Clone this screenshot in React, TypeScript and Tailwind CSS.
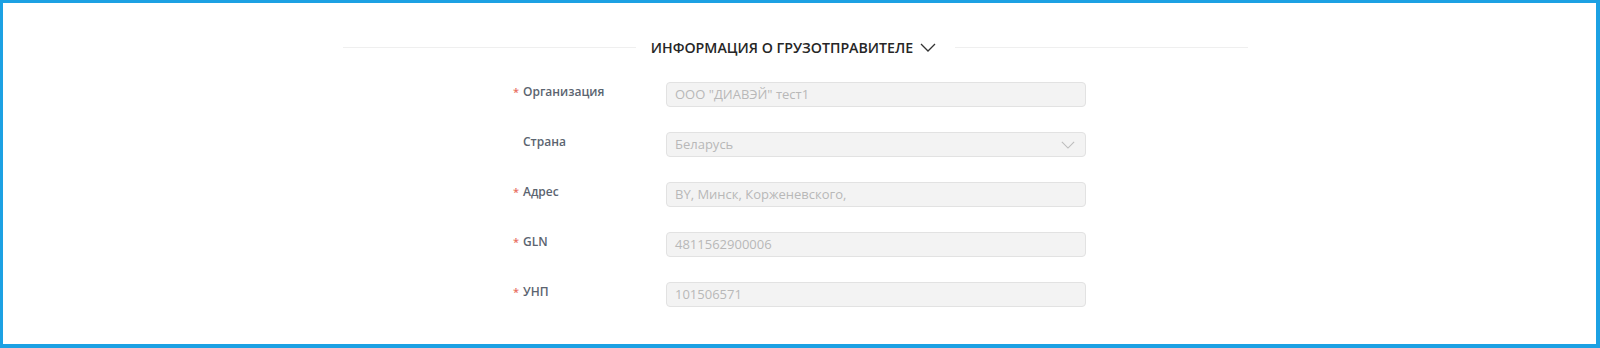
const fields = [
  { label: "Организация", value: 'ООО "ДИАВЭЙ" тест1', required: true },
  { label: "Страна", value: "Беларусь", required: false, select: true },
  { label: "Адрес", value: "BY, Минск, Корженевского,", required: true },
  { label: "GLN", value: "4811562900006", required: true },
  { label: "УНП", value: "101506571", required: true },
];

function Chevron({ className }: { className?: string }) {
  return (
    <svg viewBox="0 0 16 9" fill="none" className={className}>
      <path d="M1 1l7 7 7-7" stroke="currentColor" strokeWidth="1.3" />
    </svg>
  );
}

export default function App() {
  return (
    <div
      className="h-[348px] border-[3px] border-r-4 border-b-4 border-[#1ca1e3] bg-white"
      style={{ fontFamily: '"Open Sans", "Noto Sans", sans-serif' }}
    >
      <div className="ml-[340px] mt-[34px] flex w-[905px] items-center">
        <div className="h-px flex-1 bg-[#efefef]" />
        <div className="flex items-center gap-[7px] pl-[15px] pr-[19px] text-[14.2px] [font-weight:540] text-[#262626]">
          ИНФОРМАЦИЯ О ГРУЗОТПРАВИТЕЛЕ
          <Chevron className="h-[9px] w-[16px] text-[#333]" />
        </div>
        <div className="h-px flex-1 bg-[#efefef]" />
      </div>

      <div className="ml-[510px] mt-[24px] flex flex-col gap-[25px]">
        {fields.map((f) => (
          <div key={f.label} className="flex h-[25px] items-start">
            <div className="flex w-[153px] items-center pt-[1px] text-[12px] font-semibold text-[#5b6470]">
              <span className="w-[10px] text-[11px] text-[#e8705f]">
                {f.required ? "*" : ""}
              </span>
              {f.label}
            </div>
            <div className="flex h-[25px] w-[420px] items-center justify-between rounded-[4px] border border-[#e2e2e2] bg-[#f3f3f3] pl-[8px] pr-[10px] text-[13px] text-[#b8b8b8]">
              <span>{f.value}</span>
              {f.select && <Chevron className="h-[8px] w-[14px] text-[#bdbdbd]" />}
            </div>
          </div>
        ))}
      </div>
    </div>
  );
}
